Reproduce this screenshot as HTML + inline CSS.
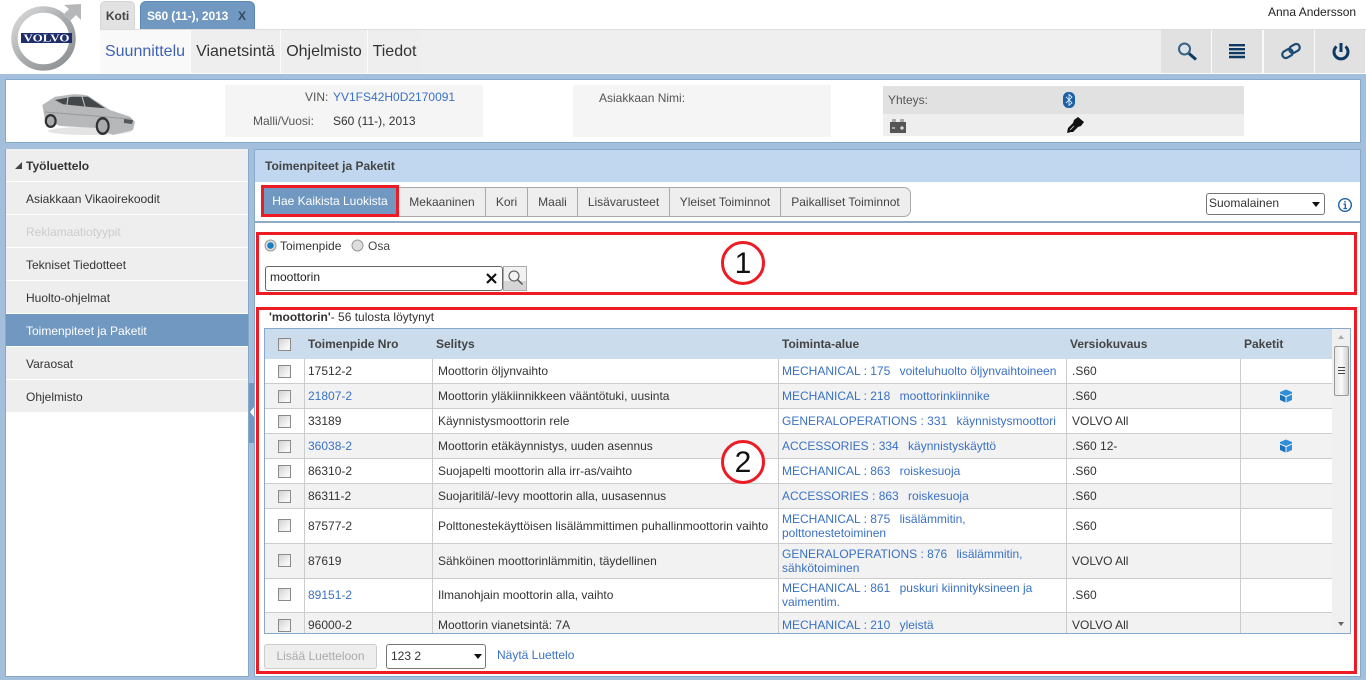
<!DOCTYPE html>
<html><head><meta charset="utf-8"><style>
*{box-sizing:border-box}
html,body{margin:0;padding:0}
body{width:1366px;height:680px;position:relative;overflow:hidden;background:#a3bfdb;font:12px/14px "Liberation Sans",sans-serif;color:#333}
.a{position:absolute}
.t{position:absolute;white-space:nowrap}
a{color:#3a71c4;text-decoration:none}
.nav{position:absolute;top:30px;height:43px;background:#eee;font-size:16px;line-height:43px;text-align:center;color:#333}
.ic{position:absolute;top:30px;height:43px;width:50px;background:#e1e1e1}
.si{position:absolute;left:6px;width:242px;height:32px;background:#eee;line-height:34px;padding-left:20px;color:#333}
.tb{position:absolute;top:187px;height:30px;background:#eee;border:1px solid #aaa;border-left:0;line-height:28px;text-align:center;color:#444}
.r{position:absolute;left:265px;width:1067px;border-bottom:1px solid #ccc}
.r.g{background:#f2f2f2}
.r.w{background:#fff}
.c{position:absolute;top:0;bottom:0;display:flex;align-items:center;line-height:14px}
.c1{left:43px;width:125px}
.c2{left:173px;width:340px}
.c3{left:517px;width:284px}
.c4{left:807px;width:170px}
.v{position:absolute;top:0;bottom:0;width:1px;background:#ccc}
.cb{position:absolute;left:13px;width:13px;height:13px;border:1px solid #8a8a8a;background:linear-gradient(135deg,#d2d2d2,#f6f6f6 75%)}
.red{position:absolute;border:3px solid #ed1c24}
.circ{position:absolute;width:44px;height:44px;border:3px solid #ed1c24;border-radius:50%;font-size:30px;line-height:40px;text-align:center;color:#111;background:#fff}
.h{position:absolute;top:337px;font-weight:bold;color:#444}
.s3{display:inline-block;width:6px}
</style></head><body>

<div class="a" style="left:0;top:0;width:1366px;height:74px;background:#fff"></div>
<svg class="a" style="left:10px;top:0" width="76" height="74" viewBox="0 0 76 74">
<defs><linearGradient id="lg" x1="0" y1="0" x2="1" y2="1"><stop offset="0" stop-color="#dcdcdc"/><stop offset=".5" stop-color="#a9acae"/><stop offset="1" stop-color="#8b8e90"/></linearGradient></defs>
<circle cx="33.500" cy="38.500" r="29" fill="none" stroke="url(#lg)" stroke-width="6.500"/>
<path d="M53 15 L59 9 L54 5 L71 4 L71 20 L66 15 L60 21Z" fill="#b5b7b9"/>
<rect x="11" y="33" width="51" height="10" fill="#1e2d6b"/>
<text x="36.500" y="41.500" font-family="Liberation Serif,serif" font-weight="bold" font-size="10" fill="#fff" text-anchor="middle" textLength="46" lengthAdjust="spacingAndGlyphs">VOLVO</text>
</svg>

<div class="a" style="left:100px;top:1px;width:35px;height:28px;background:#e2e2e2;border-radius:5px 5px 0 0;border:1px solid #d5d5d5;border-bottom:0;font-weight:bold;line-height:28px;text-align:center;color:#444">Koti</div>
<div class="a" style="left:140px;top:1px;width:115px;height:28px;background:#7098c0;border-radius:6px 6px 0 0;border:1px solid #5a88b5;border-bottom:0;font-weight:bold;line-height:28px;color:#fff;padding-left:6px;letter-spacing:-.1px">S60 (11-), 2013<span style="position:absolute;left:97px;color:#36495c;font-size:12px">X</span></div>
<div class="t" style="left:1268px;top:5px;color:#222">Anna Andersson</div>
<div class="a" style="left:100px;top:29px;width:1266px;height:45px;background:#fbfbfb;border-top:1px solid #ddd"></div>
<div class="a" style="left:421px;top:30px;width:740px;height:43px;background:#efefef"></div>
<div class="nav" style="left:100px;width:90px;background:#f9f9f9;color:#3f62b5">Suunnittelu</div>
<div class="nav" style="left:191px;width:89px">Vianetsintä</div>
<div class="nav" style="left:281px;width:86px">Ohjelmisto</div>
<div class="nav" style="left:368px;width:53px">Tiedot</div>

<div class="ic" style="left:1161px"><svg width="50" height="43"><circle cx="23.500" cy="19" r="5.500" fill="#dbe2e8" stroke="#3a6182" stroke-width="2"/><path d="M28 23.500l7 6" stroke="#0d3a62" stroke-width="3"/></svg></div>
<div class="ic" style="left:1212px"><svg width="50" height="43"><path d="M17 15.200h16M17 19.200h16M17 23.100h16M17 27h16" stroke="#0d3a62" stroke-width="2.400"/></svg></div>
<div class="ic" style="left:1264px"><svg width="50" height="43"><g fill="none" stroke="#1c4a74" stroke-width="2.200"><rect x="18" y="20" width="11" height="7" rx="3.500" transform="rotate(-30 23.500 23.500)"/><rect x="25" y="15" width="11" height="7" rx="3.500" transform="rotate(-30 30.500 18.500)"/></g></svg></div>
<div class="ic" style="left:1315px"><svg width="50" height="43"><path d="M21.500 16.500a7 7 0 1 0 9 0" fill="none" stroke="#0d3a62" stroke-width="3"/><path d="M26 13v9" stroke="#0d3a62" stroke-width="3"/></svg></div>

<!-- vehicle bar -->
<div class="a" style="left:5px;top:79px;width:1356px;height:64px;background:#fff;border:1px solid #86a8cb"></div>
<svg class="a" style="left:40px;top:92px" width="98" height="46" viewBox="0 0 98 46">
<ellipse cx="50" cy="39" rx="42" ry="4" fill="#e4e4e4"/>
<path d="M2.300 13 L15 4.700 L33 2.300 Q42 2 48 3.700 L70 18 L90 24.700 L95 29.700 L93 38 L73 43 L57 36 L20 34 L5 28Z" fill="#b6b8ba"/>
<path d="M15 8 L32 4.700 L48 4.700 L65 16.300 L47 14.700 L23 12.300Z" fill="#44474a"/>
<path d="M28 5l-1 8M42 4.500l3 10" stroke="#b6b8ba" stroke-width="1.200"/>
<path d="M5 20 L55 24 L90 27" stroke="#96989a" fill="none"/>
<ellipse cx="10.700" cy="29" rx="6" ry="7" fill="#2f3133"/><ellipse cx="10.700" cy="29" rx="3.800" ry="4.800" fill="#a8aaac"/>
<ellipse cx="62.700" cy="34" rx="7" ry="9" fill="#2f3133"/><ellipse cx="62.700" cy="34" rx="4.800" ry="6.500" fill="#a8aaac"/>
<path d="M84 27l9 1-1 4-8-1z" fill="#54575a"/>
</svg>
<div class="a" style="left:225px;top:85px;width:258px;height:52px;background:#f5f5f5"></div>
<div class="t" style="left:305px;top:90px;color:#555">VIN:</div>
<div class="t" style="left:333px;top:90px"><a>YV1FS42H0D2170091</a></div>
<div class="t" style="left:253px;top:114px;color:#555;width:75px">Malli/Vuosi:</div>
<div class="t" style="left:333px;top:114px">S60 (11-), 2013</div>
<div class="a" style="left:573px;top:85px;width:258px;height:52px;background:#f5f5f5"></div>
<div class="t" style="left:599px;top:91px;color:#555">Asiakkaan Nimi:</div>
<div class="a" style="left:883px;top:86px;width:361px;height:28px;background:#e1e1e1"></div>
<div class="a" style="left:883px;top:114px;width:361px;height:22px;background:#eee"></div>
<div class="t" style="left:888px;top:93px;color:#555">Yhteys:</div>
<svg class="a" style="left:1062px;top:91px" width="14" height="18"><rect x="1" y="1" width="12" height="16" rx="5.500" fill="#1b5fa8"/><path d="M4 5.800l6 6-3 2.500V3.500l3 2.500-6 6" fill="none" stroke="#dfefff" stroke-width=".9"/></svg>
<svg class="a" style="left:889px;top:118px" width="18" height="16"><rect x="1" y="4" width="16" height="11" fill="#555"/><rect x="3" y="1" width="4" height="3" fill="#aaa"/><rect x="11" y="1" width="4" height="3" fill="#aaa"/><path d="M3 10h3M11 10h4M13 8v4" stroke="#fff"/></svg>
<svg class="a" style="left:1066px;top:116px" width="20" height="18"><path d="M1 17l1-5 5-5 1-3 4-3 6 5-3 4-3 1-5 5-2 0z" fill="#111"/><path d="M4 14l4-4" stroke="#ddd" stroke-width=".8"/></svg>

<!-- sidebar -->
<div class="a" style="left:5px;top:149px;width:244px;height:528px;background:#fff;border:1px solid #86a8cb"></div>
<div class="si" style="top:149px;height:32px;font-weight:bold;padding-left:20px">Työluettelo</div>
<div class="a" style="left:15px;top:162px;border-left:7px solid transparent;border-bottom:7px solid #444"></div>
<div class="si" style="top:182px">Asiakkaan Vikaoirekoodit</div>
<div class="si" style="top:215px;color:#ccc">Reklamaatiotyypit</div>
<div class="si" style="top:248px">Tekniset Tiedotteet</div>
<div class="si" style="top:281px">Huolto-ohjelmat</div>
<div class="si" style="top:314px;background:#7098c0;color:#fff">Toimenpiteet ja Paketit</div>
<div class="si" style="top:347px">Varaosat</div>
<div class="si" style="top:380px">Ohjelmisto</div>
<div class="a" style="left:249px;top:383px;width:5px;height:60px;background:#7098c0"></div>
<div class="a" style="left:250px;top:407px;border-right:4px solid #fff;border-top:5px solid transparent;border-bottom:5px solid transparent"></div>

<!-- main -->
<div class="a" style="left:254px;top:149px;width:1107px;height:528px;background:#fff;border:1px solid #86a8cb"></div>
<div class="a" style="left:255px;top:150px;width:1105px;height:32px;background:#c0d7ef"></div>
<div class="t" style="left:265px;top:159px;font-weight:bold;color:#444">Toimenpiteet ja Paketit</div>

<div class="tb" style="left:399px;width:87px">Mekaaninen</div>
<div class="tb" style="left:486px;width:42px">Kori</div>
<div class="tb" style="left:528px;width:50px">Maali</div>
<div class="tb" style="left:578px;width:92px">Lisävarusteet</div>
<div class="tb" style="left:670px;width:111px">Yleiset Toiminnot</div>
<div class="tb" style="left:781px;width:130px;border-radius:0 7px 7px 0">Paikalliset Toiminnot</div>
<div class="a" style="left:261px;top:185px;width:138px;height:32px;background:#7098c0;border:3px solid #ed1c24;color:#fff;line-height:26px;text-align:center">Hae Kaikista Luokista</div>

<div class="a" style="left:1206px;top:193px;width:119px;height:22px;border:1px solid #777;border-radius:3px;background:#fff;line-height:19px;padding-left:2px">Suomalainen</div>
<div class="a" style="left:1312px;top:202px;border-top:5px solid #111;border-left:4px solid transparent;border-right:4px solid transparent"></div>
<svg class="a" style="left:1337px;top:197px" width="16" height="16"><circle cx="8" cy="8" r="6.300" fill="#fff" stroke="#1d5fa8" stroke-width="1.400"/><path d="M8 4v1.800M6.500 7.200H8.300V11.500M6.500 11.500h3.500" stroke="#1d5fa8" stroke-width="1.300" fill="none"/></svg>
<div class="a" style="left:255px;top:221px;width:1105px;height:2px;background:#8eabc9"></div>

<div class="red" style="left:256px;top:232px;width:1101px;height:63px"></div>
<svg class="a" style="left:264px;top:239px" width="14" height="14"><circle cx="6.500" cy="6.500" r="5.500" fill="#ddd" stroke="#999"/><circle cx="6.500" cy="6.500" r="3.300" fill="#1d7fc0"/></svg>
<div class="t" style="left:280px;top:239px">Toimenpide</div>
<svg class="a" style="left:351px;top:239px" width="14" height="14"><circle cx="6.500" cy="6.500" r="5.500" fill="#ddd" stroke="#999"/></svg>
<div class="t" style="left:368px;top:239px;color:#444">Osa</div>
<div class="a" style="left:265px;top:266px;width:238px;height:25px;border:1px solid #666;border-radius:3px;background:#fff;line-height:21px;padding-left:4px;color:#222">moottorin</div>
<svg class="a" style="left:485px;top:272px" width="14" height="14"><path d="M2 2l9 9M11 2l-9 9" stroke="#111" stroke-width="2.200"/></svg>
<div class="a" style="left:503px;top:266px;width:24px;height:25px;border:1px solid #aaa;background:linear-gradient(#f2f2f2 60%,#d5d5d5 60%)"></div>
<svg class="a" style="left:505px;top:268px" width="20" height="20"><circle cx="9" cy="8" r="5" fill="none" stroke="#555" stroke-width="1.100"/><path d="M12.500 11.500l5 5" stroke="#555" stroke-width="1.500"/></svg>
<div class="circ" style="left:721px;top:241px">1</div>

<div class="red" style="left:256px;top:307px;width:1101px;height:367px"></div>
<div class="t" style="left:269px;top:310px"><b>'moottorin'</b>- 56 tulosta löytynyt</div>

<!-- table -->
<div class="a" style="left:264px;top:328px;width:1087px;height:306px;background:#fff;border:1px solid #86a8cb"></div>
<div class="a" style="left:265px;top:329px;width:1067px;height:30px;background:#cbdcec"></div>
<div class="cb" style="left:278px;top:338px"></div>
<div class="h" style="left:308px">Toimenpide Nro</div>
<div class="h" style="left:436px">Selitys</div>
<div class="h" style="left:782px">Toiminta-alue</div>
<div class="h" style="left:1070px">Versiokuvaus</div>
<div class="h" style="left:1244px">Paketit</div>

<div class="r w" style="top:359px;height:25px"><div class="cb" style="top:6px"></div><div class="v" style="left:39px"></div><div class="v" style="left:167px"></div><div class="v" style="left:513px"></div><div class="v" style="left:801px"></div><div class="v" style="left:975px"></div>
<div class="c c1">17512-2</div><div class="c c2">Moottorin öljynvaihto</div><div class="c c3"><a>MECHANICAL : 175 <span class="s3"></span>voiteluhuolto öljynvaihtoineen</a></div><div class="c c4">.S60</div></div>

<div class="r g" style="top:384px;height:25px"><div class="cb" style="top:6px"></div><div class="v" style="left:39px"></div><div class="v" style="left:167px"></div><div class="v" style="left:513px"></div><div class="v" style="left:801px"></div><div class="v" style="left:975px"></div>
<div class="c c1"><a>21807-2</a></div><div class="c c2">Moottorin yläkiinnikkeen vääntötuki, uusinta</div><div class="c c3"><a>MECHANICAL : 218 <span class="s3"></span>moottorinkiinnike</a></div><div class="c c4">.S60</div>
<svg class="a" style="left:1014px;top:5px" width="14" height="14"><path d="M7 0.500l6 2.500v1.500L7 7 1 4.500V3z" fill="#2f8fd8"/><path d="M1 5.500l5.500 2.500v5.500L1 11z" fill="#1c72b8"/><path d="M13 5.500L7.500 8v5.500L13 11z" fill="#2f8fd8"/></svg></div>

<div class="r w" style="top:409px;height:25px"><div class="cb" style="top:6px"></div><div class="v" style="left:39px"></div><div class="v" style="left:167px"></div><div class="v" style="left:513px"></div><div class="v" style="left:801px"></div><div class="v" style="left:975px"></div>
<div class="c c1">33189</div><div class="c c2">Käynnistysmoottorin rele</div><div class="c c3"><a>GENERALOPERATIONS : 331 <span class="s3"></span>käynnistysmoottori</a></div><div class="c c4">VOLVO All</div></div>

<div class="r g" style="top:434px;height:25px"><div class="cb" style="top:6px"></div><div class="v" style="left:39px"></div><div class="v" style="left:167px"></div><div class="v" style="left:513px"></div><div class="v" style="left:801px"></div><div class="v" style="left:975px"></div>
<div class="c c1"><a>36038-2</a></div><div class="c c2">Moottorin etäkäynnistys, uuden asennus</div><div class="c c3"><a>ACCESSORIES : 334 <span class="s3"></span>käynnistyskäyttö</a></div><div class="c c4">.S60 12-</div>
<svg class="a" style="left:1014px;top:5px" width="14" height="14"><path d="M7 0.500l6 2.500v1.500L7 7 1 4.500V3z" fill="#2f8fd8"/><path d="M1 5.500l5.500 2.500v5.500L1 11z" fill="#1c72b8"/><path d="M13 5.500L7.500 8v5.500L13 11z" fill="#2f8fd8"/></svg></div>

<div class="r w" style="top:459px;height:25px"><div class="cb" style="top:6px"></div><div class="v" style="left:39px"></div><div class="v" style="left:167px"></div><div class="v" style="left:513px"></div><div class="v" style="left:801px"></div><div class="v" style="left:975px"></div>
<div class="c c1">86310-2</div><div class="c c2">Suojapelti moottorin alla irr-as/vaihto</div><div class="c c3"><a>MECHANICAL : 863 <span class="s3"></span>roiskesuoja</a></div><div class="c c4">.S60</div></div>

<div class="r g" style="top:484px;height:25px"><div class="cb" style="top:6px"></div><div class="v" style="left:39px"></div><div class="v" style="left:167px"></div><div class="v" style="left:513px"></div><div class="v" style="left:801px"></div><div class="v" style="left:975px"></div>
<div class="c c1">86311-2</div><div class="c c2">Suojaritilä/-levy moottorin alla, uusasennus</div><div class="c c3"><a>ACCESSORIES : 863 <span class="s3"></span>roiskesuoja</a></div><div class="c c4">.S60</div></div>

<div class="r w" style="top:509px;height:35px"><div class="cb" style="top:10px"></div><div class="v" style="left:39px"></div><div class="v" style="left:167px"></div><div class="v" style="left:513px"></div><div class="v" style="left:801px"></div><div class="v" style="left:975px"></div>
<div class="c c1">87577-2</div><div class="c c2" style="white-space:nowrap">Polttonestekäyttöisen lisälämmittimen puhallinmoottorin vaihto</div><div class="c c3"><a>MECHANICAL : 875 <span class="s3"></span>lisälämmitin, polttonestetoiminen</a></div><div class="c c4">.S60</div></div>

<div class="r g" style="top:544px;height:35px"><div class="cb" style="top:10px"></div><div class="v" style="left:39px"></div><div class="v" style="left:167px"></div><div class="v" style="left:513px"></div><div class="v" style="left:801px"></div><div class="v" style="left:975px"></div>
<div class="c c1">87619</div><div class="c c2">Sähköinen moottorinlämmitin, täydellinen</div><div class="c c3"><a>GENERALOPERATIONS : 876 <span class="s3"></span>lisälämmitin, sähkötoiminen</a></div><div class="c c4">VOLVO All</div></div>

<div class="r w" style="top:579px;height:34px"><div class="cb" style="top:9px"></div><div class="v" style="left:39px"></div><div class="v" style="left:167px"></div><div class="v" style="left:513px"></div><div class="v" style="left:801px"></div><div class="v" style="left:975px"></div>
<div class="c c1" style="bottom:2px"><a>89151-2</a></div><div class="c c2" style="bottom:2px">Ilmanohjain moottorin alla, vaihto</div><div class="c c3" style="bottom:2px"><a>MECHANICAL : 861 <span class="s3"></span>puskuri kiinnityksineen ja vaimentim.</a></div><div class="c c4" style="bottom:2px">.S60</div></div>

<div class="r g" style="top:613px;height:20px;border-bottom:0"><div class="cb" style="top:6px"></div><div class="v" style="left:39px"></div><div class="v" style="left:167px"></div><div class="v" style="left:513px"></div><div class="v" style="left:801px"></div><div class="v" style="left:975px"></div>
<div class="c c1" style="top:4px">96000-2</div><div class="c c2" style="top:4px">Moottorin vianetsintä: 7A</div><div class="c c3" style="top:4px"><a>MECHANICAL : 210 <span class="s3"></span>yleistä</a></div><div class="c c4" style="top:4px">VOLVO All</div></div>

<!-- scrollbar -->
<div class="a" style="left:1332px;top:329px;width:18px;height:304px;background:#f0f0f0"></div>
<div class="a" style="left:1338px;top:335px;border-bottom:4px solid #aaa;border-left:3px solid transparent;border-right:3px solid transparent"></div>
<div class="a" style="left:1334px;top:346px;width:15px;height:50px;border:1px solid #999;border-radius:2px;background:linear-gradient(90deg,#e8e8e8,#fafafa 50%,#cfcfcf)"></div>
<div class="a" style="left:1338px;top:367px;width:7px;height:7px;border-top:1px solid #444;border-bottom:1px solid #444"></div>
<div class="a" style="left:1338px;top:370px;width:7px;height:1px;background:#444"></div>
<div class="a" style="left:1338px;top:622px;border-top:4px solid #666;border-left:3px solid transparent;border-right:3px solid transparent"></div>

<!-- footer -->
<div class="a" style="left:264px;top:644px;width:113px;height:25px;background:#eee;border:1px solid #ccc;border-radius:3px;color:#aaa;line-height:22px;text-align:center">Lisää Luetteloon</div>
<div class="a" style="left:386px;top:644px;width:100px;height:25px;background:#fff;border:1px solid #777;border-radius:3px;line-height:22px;padding-left:4px">123 2</div>
<div class="a" style="left:474px;top:654px;border-top:5px solid #111;border-left:4px solid transparent;border-right:4px solid transparent"></div>
<div class="t" style="left:497px;top:648px"><a>Näytä Luettelo</a></div>
<div class="circ" style="left:721px;top:440px">2</div>
</body></html>
